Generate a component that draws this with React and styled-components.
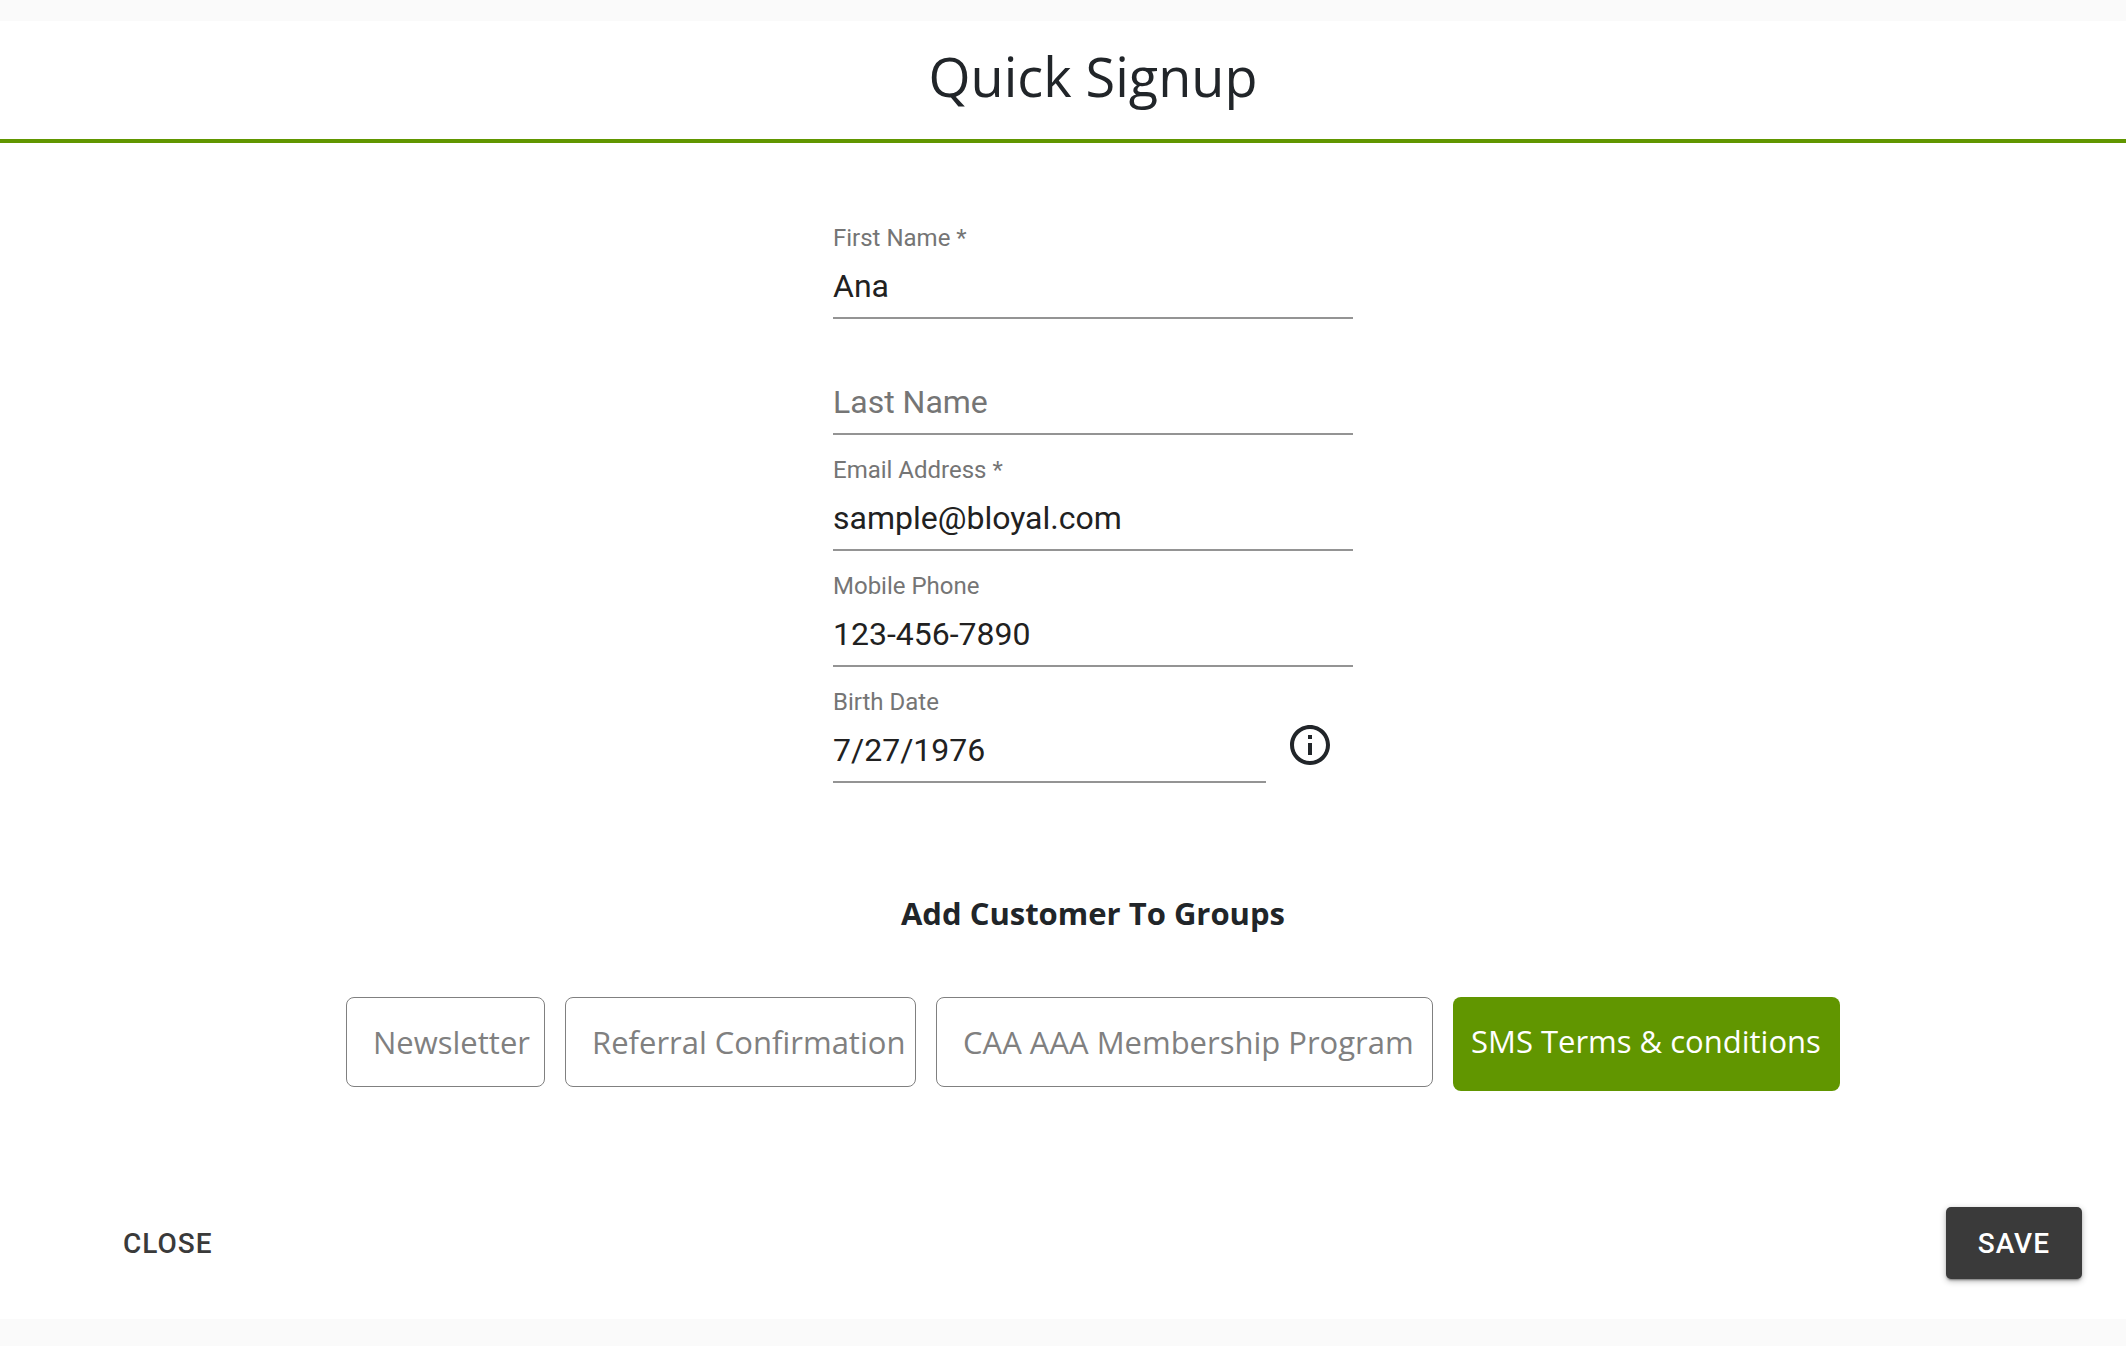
import React, { useState } from "react";
import styled, { createGlobalStyle } from "styled-components";

const GlobalStyle = createGlobalStyle`
  *, *::before, *::after { box-sizing: border-box; }
  body {
    margin: 0;
    background: #fafafa;
    color: #212529;
    font-family: "Segoe UI", "Open Sans", "Noto Sans", sans-serif;
  }
  button, input { font: inherit; margin: 0; }
`;

const Page = styled.main`
  padding: 21px 0 27px;
`;

const Panel = styled.form`
  background: #fff;
`;

const Header = styled.header`
  padding: 0 0 8px 60px;
  border-bottom: 4px solid #619600;
`;

const Title = styled.h1`
  margin: 0;
  font-size: 54px;
  font-weight: 400;
  line-height: 110px;
  text-align: center;
`;

const Content = styled.div`
  display: flex;
  flex-direction: column;
  align-items: center;
  padding: 80px 0 0 60px;
`;

const Fields = styled.div`
  display: flex;
  flex-direction: column;
  gap: 20px;
  width: 520px;
  max-width: 100%;
`;

const FieldRow = styled.div`
  display: flex;
  align-items: center;
`;

const FieldBox = styled.div`
  flex: 1;
  display: grid;
  grid-template-rows: 32px 64px;
  font-family: Roboto, sans-serif;
`;

const Label = styled.label`
  grid-column: 1;
  grid-row: ${(p) => (p.$raised ? 1 : 2)};
  padding-top: ${(p) => (p.$raised ? 3 : 12)}px;
  font-size: ${(p) => (p.$raised ? 24 : 32)}px;
  line-height: ${(p) => (p.$raised ? 24 : 38)}px;
  color: #757575;
  pointer-events: none;
`;

const Input = styled.input`
  grid-column: 1;
  grid-row: 2;
  width: 100%;
  padding: 12px 0;
  border: 0;
  border-bottom: 2px solid #949494;
  border-radius: 0;
  outline: 0;
  background: transparent;
  color: #212121;
  font-size: 32px;
  line-height: 38px;
`;

const InfoButton = styled.button`
  display: flex;
  padding: 20px 19px 0 20px;
  border: 0;
  background: none;
  color: #212529;
`;

const GroupsTitle = styled.h2`
  margin: 106px 0 60px;
  font-size: 31px;
  font-weight: 700;
  line-height: 48px;
`;

const Groups = styled.div`
  display: grid;
  grid-template-columns: 199fr 351fr 497fr 387fr;
  align-items: start;
  gap: 20px;
  width: 100%;
  max-width: 1494px;
`;

const GroupButton = styled.button`
  padding: ${(p) => (p.$selected ? "20px 18px 26px" : "20px 8px 20px 26px")};
  border: ${(p) => (p.$selected ? "0" : "1px solid #808080")};
  border-radius: 8px;
  background: ${(p) => (p.$selected ? "#619600" : "#fff")};
  color: ${(p) => (p.$selected ? "#fff" : "#808080")};
  font-size: 31px;
  line-height: 48px;
  text-align: left;
  white-space: nowrap;
`;

const Footer = styled.footer`
  display: flex;
  justify-content: space-between;
  padding: 116px 44px 40px 105px;
`;

const ActionButton = styled.button`
  height: 72px;
  padding: 2px ${(p) => (p.$filled ? 32 : 18)}px 0;
  border: 0;
  border-radius: 5px;
  background: ${(p) => (p.$filled ? "#3a3a3a" : "transparent")};
  color: ${(p) => (p.$filled ? "#fff" : "#3a3a3a")};
  box-shadow: ${(p) =>
    p.$filled
      ? "0 3px 1px -2px rgba(0,0,0,.2), 0 2px 2px 0 rgba(0,0,0,.14), 0 2px 6px 0 rgba(0,0,0,.3)"
      : "none"};
  font-family: Roboto, sans-serif;
  font-size: 28px;
  font-weight: 500;
  line-height: 48px;
  letter-spacing: 1px;
  text-transform: uppercase;
`;

function InfoIcon() {
  return (
    <svg width="48" height="48" viewBox="0 0 24 24" fill="currentColor" aria-hidden="true">
      <path d="M11 7h2v2h-2zm0 4h2v6h-2zm1-9C6.480 2 2 6.480 2 12s4.480 10 10 10 10-4.480 10-10S17.520 2 12 2zm0 18c-4.410 0-8-3.590-8-8s3.590-8 8-8 8 3.590 8 8-3.590 8-8 8z" />
    </svg>
  );
}

function Field({ id, label, type = "text", value, onChange, children }) {
  return (
    <FieldRow>
      <FieldBox>
        <Label htmlFor={id} $raised={value !== ""}>{label}</Label>
        <Input id={id} type={type} value={value} onChange={(e) => onChange(id, e.target.value)} />
      </FieldBox>
      {children}
    </FieldRow>
  );
}

const groups = [
  "Newsletter",
  "Referral Confirmation",
  "CAA AAA Membership Program",
  "SMS Terms & conditions",
];

export default function App() {
  const [customer, setCustomer] = useState({
    firstName: "Ana",
    lastName: "",
    email: "sample@bloyal.com",
    phone: "123-456-7890",
    birthDate: "7/27/1976",
  });
  const [selected, setSelected] = useState(["SMS Terms & conditions"]);

  const update = (id, value) => setCustomer((c) => ({ ...c, [id]: value }));
  const toggle = (name) =>
    setSelected((s) => (s.includes(name) ? s.filter((n) => n !== name) : [...s, name]));

  return (
    <>
      <GlobalStyle />
      <Page>
        <Panel onSubmit={(e) => e.preventDefault()}>
          <Header>
            <Title>Quick Signup</Title>
          </Header>
          <Content>
            <Fields>
              <Field id="firstName" label="First Name *" value={customer.firstName} onChange={update} />
              <Field id="lastName" label="Last Name" value={customer.lastName} onChange={update} />
              <Field id="email" label="Email Address *" value={customer.email} onChange={update} />
              <Field id="phone" label="Mobile Phone" type="tel" value={customer.phone} onChange={update} />
              <Field id="birthDate" label="Birth Date" value={customer.birthDate} onChange={update}>
                <InfoButton type="button" aria-label="About birth date">
                  <InfoIcon />
                </InfoButton>
              </Field>
            </Fields>
            <GroupsTitle>Add Customer To Groups</GroupsTitle>
            <Groups>
              {groups.map((name) => (
                <GroupButton
                  key={name}
                  type="button"
                  aria-pressed={selected.includes(name)}
                  $selected={selected.includes(name)}
                  onClick={() => toggle(name)}
                >
                  {name}
                </GroupButton>
              ))}
            </Groups>
          </Content>
          <Footer>
            <ActionButton type="button">Close</ActionButton>
            <ActionButton type="submit" $filled>Save</ActionButton>
          </Footer>
        </Panel>
      </Page>
    </>
  );
}
